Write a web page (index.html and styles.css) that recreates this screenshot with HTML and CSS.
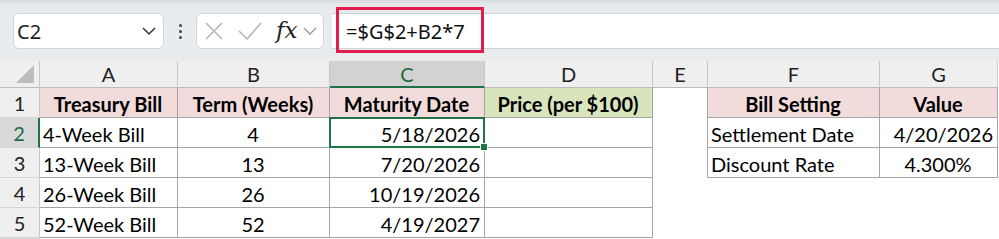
FILE: index.html
```html
<!DOCTYPE html>
<html lang="en">
<head>
    <meta charset="UTF-8">
    <title>Treasury Bills</title>
    <link rel="stylesheet" href="styles.css">
</head>
<body>
    <div class="toolbar">
        <div class="name-box">
            <span>C2</span>
            <svg width="16" height="10" viewBox="0 0 16 10"><path d="M2 2 L8 8 L14 2" fill="none" stroke="#333" stroke-width="1.5"/></svg>
        </div>
        <div class="dots"><i></i><i></i><i></i></div>
        <div class="fx-box">
            <svg class="ico-x" width="18" height="18" viewBox="0 0 18 18"><path d="M1 1 L17 17 M17 1 L1 17" stroke="#b5b5b5" stroke-width="1.6"/></svg>
            <svg class="ico-ok" width="24" height="18" viewBox="0 0 24 18"><path d="M1 9 L9 17 L23 1" fill="none" stroke="#b5b5b5" stroke-width="1.6"/></svg>
            <span class="fx">fx</span>
            <svg width="16" height="10" viewBox="0 0 16 10"><path d="M2 2 L8 8 L14 2" fill="none" stroke="#999" stroke-width="1.4"/></svg>
        </div>
        <div class="formula">
            <span>=$G$2+B2*7</span>
            <div class="mark"></div>
        </div>
    </div>

    <div class="sheet">
        <div class="corner"></div>
        <div class="ch">A</div>
        <div class="ch">B</div>
        <div class="ch sel">C</div>
        <div class="ch">D</div>
        <div class="ch">E</div>
        <div class="ch">F</div>
        <div class="ch">G</div>

        <div class="rh">1</div>
        <div class="c b pink bold m">Treasury Bill</div>
        <div class="c b pink bold m">Term (Weeks)</div>
        <div class="c b pink bold m">Maturity Date</div>
        <div class="c b green bold m">Price (per $100)</div>
        <div class="c er"></div>
        <div class="c b pink bold m">Bill Setting</div>
        <div class="c b pink bold m">Value</div>

        <div class="rh sel">2</div>
        <div class="c b">4-Week Bill</div>
        <div class="c b m">4</div>
        <div class="c b r active">5/18/2026<div class="cursor"><i></i></div></div>
        <div class="c b"></div>
        <div class="c er"></div>
        <div class="c b">Settlement Date</div>
        <div class="c b r">4/20/2026</div>

        <div class="rh">3</div>
        <div class="c b">13-Week Bill</div>
        <div class="c b m">13</div>
        <div class="c b r">7/20/2026</div>
        <div class="c b"></div>
        <div class="c er"></div>
        <div class="c b">Discount Rate</div>
        <div class="c b m">4.300%</div>

        <div class="rh">4</div>
        <div class="c b">26-Week Bill</div>
        <div class="c b m">26</div>
        <div class="c b r">10/19/2026</div>
        <div class="c b"></div>
        <div class="c"></div>
        <div class="c"></div>
        <div class="c"></div>

        <div class="rh">5</div>
        <div class="c b">52-Week Bill</div>
        <div class="c b m">52</div>
        <div class="c b r">4/19/2027</div>
        <div class="c b"></div>
        <div class="c"></div>
        <div class="c"></div>
        <div class="c"></div>

        <div class="rh"></div>
    </div>
</body>
</html>
```

FILE: styles.css
```css
body {
    margin: 0;
    width: 999px;
    height: 239px;
    overflow: hidden;
    background: #fff;
    font-family: Lato, sans-serif;
}
.toolbar {
    height: 61px;
    box-sizing: border-box;
    display: flex;
    align-items: flex-start;
    padding-top: 13px;
    background: linear-gradient(#d6dadf 0px, #e4e7ea 4px, #e9ecef 12px);
}
.name-box {
    width: 151px;
    height: 36px;
    margin-left: 13px;
    box-sizing: border-box;
    background: #fff;
    border: 1px solid #d3d6da;
    border-radius: 6px;
    display: flex;
    align-items: center;
    justify-content: space-between;
    padding: 0 6px 0 3px;
    font-family: "Noto Sans", sans-serif;
    font-size: 20px;
    color: #222;
}
.dots {
    width: 32px;
    height: 36px;
    display: flex;
    flex-direction: column;
    align-items: center;
    justify-content: center;
    gap: 3px;
}
.dots i {
    width: 3px;
    height: 3px;
    background: #444;
    border-radius: 50%;
}
.fx-box {
    width: 128px;
    height: 36px;
    box-sizing: border-box;
    background: #fff;
    border: 1px solid #d3d6da;
    border-radius: 6px;
    display: flex;
    align-items: center;
    padding-left: 8px;
}
.ico-x {
    margin-right: 15px;
}
.ico-ok {
    margin-right: 14px;
}
.fx {
    font-family: "DejaVu Serif", serif;
    font-style: italic;
    font-size: 23px;
    color: #222;
    margin-right: 5px;
    margin-top: -3px;
}
.formula {
    flex: 1;
    height: 36px;
    margin-left: 8px;
    box-sizing: border-box;
    background: #fff;
    border-top: 1px solid #cfd2d6;
    border-bottom: 1px solid #cfd2d6;
    position: relative;
    display: flex;
    align-items: center;
    padding-left: 14px;
    font-family: "Noto Sans", sans-serif;
    font-size: 20px;
    color: #111;
}
.mark {
    position: absolute;
    left: 4px;
    top: -7px;
    width: 148px;
    height: 46px;
    box-sizing: border-box;
    border: 3px solid #e21d4b;
}
.sheet {
    display: grid;
    grid-template-columns: 40px 138px 152px 155px 168px 55px 172px 118px;
    grid-template-rows: 27px repeat(5, 30px) 1px;
}
.corner {
    background: #efefef;
    border-right: 1px solid #c8c8c8;
    border-bottom: 1px solid #bdbdbd;
    position: relative;
}
.corner::after {
    content: "";
    position: absolute;
    right: 5px;
    bottom: 4px;
    border-left: 18px solid transparent;
    border-bottom: 18px solid #bdbdbd;
}
.ch {
    background: #efefef;
    border-right: 1px solid #c8c8c8;
    border-bottom: 1px solid #bdbdbd;
    text-align: center;
    font-size: 20px;
    line-height: 27px;
    color: #222;
}
.ch.sel {
    background: #d2d2d2;
    color: #1d6b3c;
    border-bottom: 2px solid #217346;
}
.rh {
    background: #efefef;
    border-right: 1px solid #c8c8c8;
    border-bottom: 1px solid #d4d4d4;
    text-align: center;
    font-size: 20px;
    line-height: 31px;
    color: #222;
}
.rh.sel {
    background: #d9d9d9;
    color: #1d6b3c;
    border-right: 2px solid #217346;
}
.c {
    box-sizing: border-box;
    padding: 0 4px 0 3px;
    font-size: 20px;
    line-height: 32px;
    color: #000;
    white-space: nowrap;
    overflow: visible;
}
.b {
    border-right: 1px solid #a6a6a6;
    border-bottom: 1px solid #a6a6a6;
}
.er {
    border-right: 1px solid #a6a6a6;
}
.pink {
    background: #f2dcdb;
}
.green {
    background: #d8e4bc;
}
.bold {
    font-weight: bold;
}
.m {
    text-align: center;
}
.r {
    text-align: right;
}
.active {
    position: relative;
}
.cursor {
    position: absolute;
    left: -1px;
    top: -1px;
    right: -1px;
    bottom: -1px;
    border: 2px solid #217346;
}
.cursor i {
    position: absolute;
    right: -5px;
    bottom: -5px;
    width: 6px;
    height: 6px;
    background: #217346;
    border: 1px solid #fff;
}
```
